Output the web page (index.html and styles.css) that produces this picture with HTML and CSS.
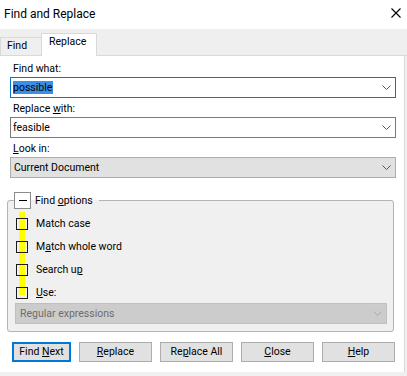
FILE: index.html
```html
<!DOCTYPE html>
<html>
<head>
<meta charset="utf-8">
<link rel="stylesheet" href="styles.css">
</head>
<body>
<div class="titlebar">
  <span class="title">Find and Replace</span>
  <svg class="close" width="10" height="10" viewBox="0 0 10 10"><path d="M0.5 0.5L9.5 9.5M9.5 0.5L0.5 9.5" stroke="#000" stroke-width="1.1" fill="none"/></svg>
</div>
<div class="tabstrip">
  <div class="tab">Find</div>
  <div class="tab active">Replace</div>
</div>
<div class="panel">
  <div class="lbl first">Find what:</div>
  <div class="combo focus">
    <span class="val"><span class="sel">possible</span></span>
    <svg class="chev" width="9" height="5" viewBox="0 0 9 5"><path d="M0.5 0.5L4.5 4.5L8.5 0.5" stroke="#555" fill="none"/></svg>
  </div>
  <div class="lbl">Replace <u>w</u>ith:</div>
  <div class="combo">
    <span class="val">feasible</span>
    <svg class="chev" width="9" height="5" viewBox="0 0 9 5"><path d="M0.5 0.5L4.5 4.5L8.5 0.5" stroke="#555" fill="none"/></svg>
  </div>
  <div class="lbl"><u>L</u>ook in:</div>
  <div class="combo ro">
    <span class="val">Current Document</span>
    <svg class="chev" width="9" height="5" viewBox="0 0 9 5"><path d="M0.5 0.5L4.5 4.5L8.5 0.5" stroke="#555" fill="none"/></svg>
  </div>
  <fieldset class="group">
    <legend class="legend"><span class="toggle"><span class="minus"></span></span><span>Find <u>o</u>ptions</span></legend>
    <div class="options">
      <div class="opt"><span class="check"></span><span>Match case</span></div>
      <div class="opt"><span class="check"></span><span>M<u>a</u>tch whole word</span></div>
      <div class="opt"><span class="check"></span><span>Search u<u>p</u></span></div>
      <div class="opt"><span class="check"></span><span><u>U</u>se:</span></div>
    </div>
    <div class="combo disabled">
      <span class="val">Regular expressions</span>
      <svg class="chev" width="9" height="5" viewBox="0 0 9 5"><path d="M0.5 0.5L4.5 4.5L8.5 0.5" stroke="#a8a8a8" fill="none"/></svg>
    </div>
  </fieldset>
  <div class="buttons">
    <button class="btn default">Find <u>N</u>ext</button>
    <button class="btn"><u>R</u>eplace</button>
    <button class="btn">Re<u>p</u>lace All</button>
    <button class="btn"><u>C</u>lose</button>
    <button class="btn"><u>H</u>elp</button>
  </div>
</div>
</body>
</html>
```

FILE: styles.css
```css
* { box-sizing: border-box; }
html, body { margin: 0; padding: 0; }
body {
  width: 407px;
  height: 376px;
  overflow: hidden;
  background: #f0f0f0;
  font-family: Roboto, "Liberation Sans", sans-serif;
  font-size: 10.5px;
  color: #000;
}
u { text-underline-offset: 1px; }

.titlebar {
  height: 29px;
  background: #fff;
  display: flex;
  align-items: flex-start;
  justify-content: space-between;
  padding: 0 6px 0 4px;
}
.title { font-size: 12px; line-height: 12px; margin-top: 8px; }
.close { margin-top: 8px; display: block; }

.tabstrip {
  height: 27px;
  background: #efefef;
  border-bottom: 1px solid #d9d9d9;
  display: flex;
  align-items: flex-end;
}
.tab {
  height: 18px;
  width: 41px;
  border: 1px solid #d9d9d9;
  border-right: none;
  border-bottom: none;
  padding: 1px 0 0 6px;
  line-height: 13px;
}
.tab.active {
  width: 56px;
  height: 23px;
  margin-bottom: -1px;
  border-right: 1px solid #d9d9d9;
  background: #fff;
  padding: 1px 0 0 7px;
}

.panel {
  width: 405px;
  height: 316px;
  background: #fff;
  border-right: 1px solid #d9d9d9;
  padding-top: 2px;
}
.lbl {
  height: 13px;
  line-height: 13px;
  margin: 4px 0 2px 13px;
}
.combo {
  width: 386px;
  height: 21px;
  margin-left: 10px;
  border: 1px solid #7a7a7a;
  background: #fff;
  display: flex;
  align-items: center;
  padding: 0 4px 0 2px;
}
.combo.focus { border-color: #0078d7; }
.combo.ro { background: #e1e1e1; border-color: #adadad; padding-left: 3px; }
.val { flex: 1; line-height: 13px; white-space: nowrap; }
.sel { background: #3a8ee6; color: #000; display: inline-block; padding: 0 1px 0 0; }
.chev { display: block; flex: none; }

.group {
  width: 387px;
  margin: 14px 0 0 7px;
  border: 1px solid #b4b4b4;
  border-radius: 3px;
  padding: 3px 6px 7px 8px;
  background: #f0f0f0;
  min-width: 0;
}
.legend {
  display: flex;
  align-items: center;
  gap: 4px;
  padding: 0 6px 0 0;
  margin-left: -2px;
  line-height: 13px;
}
.toggle {
  width: 17px;
  height: 17px;
  border: 1px solid #8c8c8c;
  background: #fff;
  display: flex;
  align-items: center;
  justify-content: center;
}
.minus { width: 8px; height: 1px; background: #000; }

.options {
  padding-top: 5px;
  display: flex;
  flex-direction: column;
  gap: 10px;
  background: linear-gradient(#ffff00, #ffff00) no-repeat 3px 0 / 6px 83px;
}
.opt {
  height: 13px;
  line-height: 13px;
  display: flex;
  align-items: center;
  gap: 8px;
}
.check {
  width: 12px;
  height: 12px;
  border: 1px solid #1a1a1a;
  flex: none;
}
.combo.disabled {
  width: 372px;
  margin: 4px 0 0 -1px;
  background: #cccccc;
  border-color: #bfbfbf;
  color: #6d6d6d;
  padding-left: 4px;
}

.buttons {
  display: flex;
  gap: 8px;
  margin: 10px 0 0 12px;
}
.btn {
  width: 73px;
  height: 20px;
  padding: 0;
  border: 1px solid #adadad;
  background: #e1e1e1;
  font-family: inherit;
  font-size: 10.5px;
  color: #000;
  line-height: 16px;
}
.btn.default { width: 59px; border: 2px solid #0078d7; }
```
